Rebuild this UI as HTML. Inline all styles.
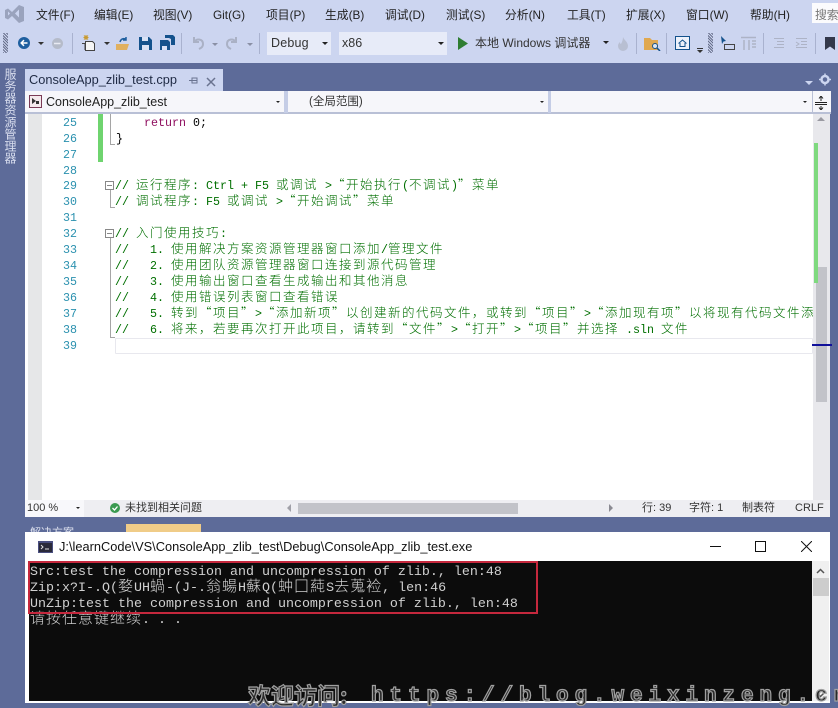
<!DOCTYPE html>
<html lang="zh-CN"><head><meta charset="utf-8"><title>ConsoleApp_zlib_test</title>
<style>
html,body{margin:0;padding:0;background:#5d6b99}
#r{position:relative;width:838px;height:708px;overflow:hidden;background:#5d6b99;font-family:"Liberation Sans","Noto Sans CJK SC",sans-serif;font-size:12px;color:#1e1e1e}
#r div,#r span.a,#r svg{position:absolute}
.t{white-space:nowrap}
.m{top:7px;line-height:16px;font-size:11.8px;white-space:nowrap;color:#222}
.n{left:50px;width:27px;text-align:right;color:#2b91af;font:11.67px/16px "Liberation Mono",monospace}
.l{left:115px;white-space:pre;color:#006f00;font:11.67px/16px "Liberation Mono",monospace}
.l i,.k i{font-style:normal;font-family:"Noto Sans CJK SC",sans-serif;line-height:0;font-size:12.5px;letter-spacing:1.5px;font-weight:300}
.k{left:30px;white-space:pre;color:#d0d0d0;font:13.33px/16px "Liberation Mono",monospace}
.k i{font-size:15px;letter-spacing:1px;font-weight:300}
.sep{width:1px;background:#a9b2cf}
</style></head><body><div id="r">

<!-- top chrome -->
<div style="left:0;top:0;width:838px;height:63px;background:#ccd5f0"></div>
<svg style="left:4px;top:3px" width="21" height="21" viewBox="0 0 21 21"><path d="M1 7l3-1.500 4 3.500 7-7 5 2v14l-5 2-7-7-4 3.500-3-1.500zM4 8.500v4l2-2zM15 6.500l-4 4 4 4z" fill="#9aa3bd" fill-rule="evenodd"/></svg>
<div class="m" style="left:36px">文件(F)</div>
<div class="m" style="left:94px">编辑(E)</div>
<div class="m" style="left:153px">视图(V)</div>
<div class="m" style="left:213px">Git(G)</div>
<div class="m" style="left:266px">项目(P)</div>
<div class="m" style="left:325px">生成(B)</div>
<div class="m" style="left:385px">调试(D)</div>
<div class="m" style="left:446px">测试(S)</div>
<div class="m" style="left:505px">分析(N)</div>
<div class="m" style="left:567px">工具(T)</div>
<div class="m" style="left:626px">扩展(X)</div>
<div class="m" style="left:686px">窗口(W)</div>
<div class="m" style="left:750px">帮助(H)</div>
<div style="left:812px;top:3px;width:26px;height:20px;background:#fbfbfd"></div>
<div class="m" style="left:815px;color:#777">搜索</div>

<!-- toolbar -->
<div style="left:3px;top:33px;width:5px;height:20px;background:repeating-linear-gradient(45deg,#68708c 0 1px,#ccd5f0 1px 2px)"></div>
<svg style="left:17px;top:36px" width="14" height="14" viewBox="0 0 14 14"><circle cx="7" cy="7" r="6" fill="#1f5f9f"/><path d="M10.500 7H4.500M7 4.200L4.200 7 7 9.800" stroke="#fff" stroke-width="1.500" fill="none"/></svg>
<div style="left:38px;top:42px;border:3px solid transparent;border-top-color:#333"></div>
<svg style="left:51px;top:37px" width="13" height="13" viewBox="0 0 13 13"><circle cx="6.500" cy="6.500" r="5.500" fill="#b5bbc9"/><path d="M3 6.500H9.500" stroke="#e8eaf2" stroke-width="1.500"/></svg>
<div class="sep" style="left:72px;top:33px;height:21px"></div>
<svg style="left:81px;top:35px" width="15" height="16" viewBox="0 0 15 16"><path d="M4.500 6.500h7l2 2v7h-9z" fill="#f5f5f5" stroke="#444"/><path d="M1 8.500h3v6h1" fill="none" stroke="#444"/><path d="M5 0v5M2.500 2.500h5M3 .500l4 4M7 .500l-4 4" stroke="#c89a30"/></svg>
<div style="left:104px;top:42px;border:3px solid transparent;border-top-color:#333"></div>
<svg style="left:115px;top:36px" width="15" height="15" viewBox="0 0 15 15"><path d="M1 8h13l-2 6H1z" fill="#e0b060"/><path d="M5 6C6 2.500 9 2 11 3.500M11 1v3H8" stroke="#1f5f9f" stroke-width="1.500" fill="none"/></svg>
<svg style="left:139px;top:37px" width="13" height="13" viewBox="0 0 13 13"><path d="M0 0h10l3 3v10H0z" fill="#14528c"/><path d="M3 0h6v4H3zM3 8h7v5H3z" fill="#d9e2f5"/></svg>
<svg style="left:160px;top:35px" width="15" height="15" viewBox="0 0 15 15"><path d="M0 5h8l2 2v8H0z" fill="#14528c"/><path d="M5 0h8l2 2v8h-4V4L9 3H5z" fill="#14528c"/><path d="M2 11h5v4H2z" fill="#d9e2f5"/></svg>
<div class="sep" style="left:181px;top:33px;height:21px"></div>
<svg style="left:191px;top:36px" width="14" height="14" viewBox="0 0 14 14"><path d="M3 1v5h5M3 6c3-4 9-3 9 2 0 3-2 4-4 5" stroke="#aab1c5" stroke-width="2" fill="none"/></svg>
<div style="left:212px;top:43px;border:3px solid transparent;border-top-color:#8a90a5"></div>
<svg style="left:225px;top:36px" width="14" height="14" viewBox="0 0 14 14"><path d="M11 1v5H6M11 6C8 2 2 3 2 8c0 3 2 4 4 5" stroke="#aab1c5" stroke-width="2" fill="none"/></svg>
<div style="left:247px;top:43px;border:3px solid transparent;border-top-color:#8a90a5"></div>
<div class="sep" style="left:259px;top:33px;height:21px"></div>
<div style="left:267px;top:32px;width:64px;height:23px;background:#e7ebf8"></div>
<div class="t" style="left:271px;top:35px;font-size:12.500px;line-height:17px;color:#333;letter-spacing:.2px">Debug</div>
<div style="left:322px;top:42px;border:3px solid transparent;border-top-color:#222"></div>
<div style="left:339px;top:32px;width:108px;height:23px;background:#e7ebf8"></div>
<div class="t" style="left:342px;top:35px;font-size:12.500px;line-height:17px;color:#333">x86</div>
<div style="left:438px;top:42px;border:3px solid transparent;border-top-color:#222"></div>
<svg style="left:458px;top:37px" width="11" height="13" viewBox="0 0 11 13"><path d="M0 0l10 6.500L0 13z" fill="#2e7d32"/></svg>
<div class="t" style="left:475px;top:35px;font-size:12px;line-height:17px;color:#333">本地 Windows 调试器</div>
<div style="left:603px;top:41px;border:3px solid transparent;border-top-color:#222"></div>
<svg style="left:617px;top:37px" width="12" height="14" viewBox="0 0 12 14"><path d="M6 0c1 3 5 5 5 9a5 5 0 0 1-10 0c0-2 1-3 2-4 0 2 1 2 1 2 1-2 2-4 2-7z" fill="#b8bfd2"/></svg>
<div class="sep" style="left:636px;top:33px;height:21px"></div>
<svg style="left:644px;top:37px" width="17" height="14" viewBox="0 0 17 14"><path d="M0 1h6l2 2h6v10H0z" fill="#e0a850"/><circle cx="11" cy="9" r="2.500" fill="#dce6f5" stroke="#14528c"/><path d="M13 11l3 3" stroke="#14528c" stroke-width="1.500"/></svg>
<div class="sep" style="left:666px;top:33px;height:21px"></div>
<svg style="left:675px;top:36px" width="15" height="14" viewBox="0 0 15 14"><path d="M.5.500h14v13H.5z" fill="#eef2fb" stroke="#14528c"/><path d="M3.500 7.500L7.500 4l4 3.500M5 7v3.500h5V7" stroke="#14528c" fill="none"/></svg>
<div style="left:697px;top:48px;width:6px;height:1px;background:#333"></div>
<div style="left:697px;top:50px;border:3px solid transparent;border-top-color:#333"></div>
<div style="left:708px;top:33px;width:5px;height:20px;background:repeating-linear-gradient(45deg,#68708c 0 1px,#ccd5f0 1px 2px)"></div>
<svg style="left:720px;top:36px" width="15" height="15" viewBox="0 0 15 15"><path d="M1 0l5 5-2.500.500L2 8z" fill="#14528c"/><path d="M4.500 8.500h10v5h-10z" fill="none" stroke="#444"/></svg>
<svg style="left:741px;top:36px" width="16" height="15" viewBox="0 0 16 15"><path d="M0 1.500h15M3 4v10M8 4v10M11 5h4M11 8h4M11 11h4" stroke="#adb3c6" stroke-width="1.500"/></svg>
<div class="sep" style="left:763px;top:33px;height:21px"></div>
<svg style="left:773px;top:38px" width="12" height="11" viewBox="0 0 12 11"><path d="M1 .500h10M4 3.500h7M4 6.500h7M1 9.500h10" stroke="#adb3c6"/></svg>
<svg style="left:795px;top:38px" width="13" height="11" viewBox="0 0 13 11"><path d="M1 .500h11M6 3.500h6M6 6.500h6M1 9.500h11M1 4l3 2-3 2" stroke="#adb3c6" fill="none"/></svg>
<div class="sep" style="left:815px;top:33px;height:21px"></div>
<svg style="left:825px;top:37px" width="10" height="13" viewBox="0 0 10 13"><path d="M0 0h10v13L5 9.500 0 13z" fill="#33384a"/></svg>

<!-- side tab -->
<div class="t" style="left:3px;top:68px;writing-mode:vertical-rl;font-size:12px;line-height:13px;letter-spacing:0;color:#d8ddee">服务器资源管理器</div>

<!-- doc tab -->
<div style="left:25px;top:69px;width:198px;height:22px;background:#ccd5f0"></div>
<div class="t" style="left:29px;top:72px;font-size:12.800px;line-height:16px;color:#1f2a44">ConsoleApp_zlib_test.cpp</div>
<svg style="left:189px;top:76px" width="9" height="9" viewBox="0 0 9 9"><path d="M0 4.500h3M3 2v5h5V2zM3 4.500h5" stroke="#6a7390" fill="none"/></svg>
<svg style="left:206px;top:77px" width="10" height="10" viewBox="0 0 10 10"><path d="M1 1l8 8M9 1l-8 8" stroke="#6a7390" stroke-width="1.500"/></svg>
<div style="left:805px;top:81px;border:4px solid transparent;border-top-color:#ccd5f0"></div>
<svg style="left:819px;top:73px" width="12" height="13" viewBox="0 0 12 13"><circle cx="6" cy="6.500" r="3.500" fill="none" stroke="#ccd5f0" stroke-width="2.500"/><path d="M6 .500v2M6 10.500v2M0 6.500h2M10 6.500h2" stroke="#ccd5f0" stroke-width="1.500"/></svg>

<!-- nav bar -->
<div style="left:25px;top:91px;width:806px;height:22px;background:#f6f6fa"></div>
<div style="left:25px;top:112px;width:806px;height:2px;background:#b9c0d6"></div>
<div style="left:284px;top:91px;width:4px;height:22px;background:#c5cde6"></div>
<div style="left:548px;top:91px;width:3px;height:22px;background:#c5cde6"></div>
<div style="left:812px;top:91px;width:1px;height:22px;background:#b9c0d6"></div>
<svg style="left:29px;top:95px" width="14" height="14" viewBox="0 0 14 14"><path d="M.5.500h12v12H.5z" fill="#f4e9ec" stroke="#7a3a55"/><path d="M3 3l4 3-4 3zM7 6h3v3H7z" fill="#333"/></svg>
<div class="t" style="left:46px;top:94px;font-size:12.500px;line-height:16px;color:#222">ConsoleApp_zlib_test</div>
<div style="left:276px;top:101px;border:2.500px solid transparent;border-top-color:#222"></div>
<div class="t" style="left:309px;top:94px;font-size:11.500px;line-height:16px;color:#333">(全局范围)</div>
<div style="left:540px;top:101px;border:2.500px solid transparent;border-top-color:#222"></div>
<div style="left:803px;top:101px;border:2.500px solid transparent;border-top-color:#222"></div>
<svg style="left:815px;top:96px" width="12" height="14" viewBox="0 0 12 14"><path d="M0 6.500h12M0 8.500h12M6 0v5M6 10v4M4 2.500l2-2.500 2 2.500M4 11.500l2 2.500 2-2.500" stroke="#222" fill="none"/></svg>

<!-- editor -->
<div style="left:25px;top:114px;width:788px;height:386px;background:#fff"></div>
<div style="left:28px;top:114px;width:14px;height:386px;background:#e6e7e8"></div>
<div style="left:98px;top:114px;width:5px;height:48px;background:#6fd46f"></div>
<div style="left:115px;top:338px;width:696px;height:14px;border:1px solid #e8e8ee;border-radius:1px"></div>

<div class="n" style="top:115px">25</div><div class="n" style="top:131px">26</div><div class="n" style="top:147px">27</div><div class="n" style="top:163px">28</div><div class="n" style="top:178px">29</div><div class="n" style="top:194px">30</div><div class="n" style="top:210px">31</div><div class="n" style="top:226px">32</div><div class="n" style="top:242px">33</div><div class="n" style="top:258px">34</div><div class="n" style="top:274px">35</div><div class="n" style="top:290px">36</div><div class="n" style="top:306px">37</div><div class="n" style="top:322px">38</div><div class="n" style="top:338px">39</div>

<div style="left:110px;top:114px;width:1px;height:30px;background:#a5a5a5"></div>
<div style="left:110px;top:144px;width:5px;height:1px;background:#a5a5a5"></div>
<div style="left:110px;top:190px;width:1px;height:17px;background:#a5a5a5"></div>
<div style="left:110px;top:207px;width:5px;height:1px;background:#a5a5a5"></div>
<div style="left:110px;top:238px;width:1px;height:99px;background:#a5a5a5"></div>
<div style="left:110px;top:337px;width:5px;height:1px;background:#a5a5a5"></div>
<svg style="left:105px;top:181px" width="9" height="9" viewBox="0 0 9 9"><path d="M.5.500h8v8h-8zM2 4.500h5" fill="#fff" stroke="#888"/></svg>
<svg style="left:105px;top:229px" width="9" height="9" viewBox="0 0 9 9"><path d="M.5.500h8v8h-8zM2 4.500h5" fill="#fff" stroke="#888"/></svg>

<div class="l" style="left:144px;top:115px;color:#000"><span style="color:#8f0e5f">return</span> 0;</div>
<div class="l" style="left:116px;top:131px;color:#000">}</div>
<div class="l" style="top:178px">// <i>运行程序</i>: Ctrl + F5 <i>或调试</i> &gt;<i>“开始执行</i>(<i>不调试</i>)<i>”菜单</i></div>
<div class="l" style="top:194px">// <i>调试程序</i>: F5 <i>或调试</i> &gt;<i>“开始调试”菜单</i></div>
<div class="l" style="top:226px">// <i>入门使用技巧</i>:</div>
<div class="l" style="top:242px">//   1. <i>使用解决方案资源管理器窗口添加</i>/<i>管理文件</i></div>
<div class="l" style="top:258px">//   2. <i>使用团队资源管理器窗口连接到源代码管理</i></div>
<div class="l" style="top:274px">//   3. <i>使用输出窗口查看生成输出和其他消息</i></div>
<div class="l" style="top:290px">//   4. <i>使用错误列表窗口查看错误</i></div>
<div class="l" style="top:306px;width:698px;overflow:hidden">//   5. <i>转到“项目”</i>&gt;<i>“添加新项”以创建新的代码文件，或转到“项目”</i>&gt;<i>“添加现有项”以将现有代码文件添</i></div>
<div class="l" style="top:322px">//   6. <i>将来，若要再次打开此项目，请转到“文件”</i>&gt;<i>“打开”</i>&gt;<i>“项目”并选择</i> .sln <i>文件</i></div>

<!-- editor scrollbar -->
<div style="left:813px;top:114px;width:17px;height:386px;background:#e8e8ec"></div>
<div style="left:817px;top:117px;border:4px solid transparent;border-bottom-color:#9a9aa2;border-top:0"></div>
<div style="left:816px;top:267px;width:11px;height:135px;background:#c2c3c9"></div>
<div style="left:814px;top:143px;width:4px;height:140px;background:#7fd97f"></div>
<div style="left:812px;top:344px;width:20px;height:2px;background:#10109a"></div>

<!-- status row -->
<div style="left:25px;top:500px;width:805px;height:17px;background:#eeeef2"></div>
<div style="left:25px;top:500px;width:59px;height:17px;background:#f8f8fb"></div>
<div class="t" style="left:27px;top:501px;font-size:11px;line-height:15px;color:#333">100 %</div>
<div style="left:76px;top:507px;border:2.500px solid transparent;border-top-color:#222"></div>
<svg style="left:110px;top:503px" width="10" height="10" viewBox="0 0 10 10"><circle cx="5" cy="5" r="5" fill="#3a9a50"/><path d="M2.500 5l2 2 3-3.500" stroke="#fff" stroke-width="1.300" fill="none"/></svg>
<div class="t" style="left:125px;top:500px;font-size:11px;line-height:16px;color:#333">未找到相关问题</div>
<div style="left:287px;top:504px;border:4px solid transparent;border-right-color:#a0a0a8;border-left:0"></div>
<div style="left:298px;top:503px;width:220px;height:11px;background:#c2c3c9"></div>
<div style="left:609px;top:504px;border:4px solid transparent;border-left-color:#8a8a92;border-right:0"></div>
<div class="t" style="left:642px;top:500px;font-size:11px;line-height:16px;color:#333">行: 39</div>
<div class="t" style="left:689px;top:500px;font-size:11px;line-height:16px;color:#333">字符: 1</div>
<div class="t" style="left:742px;top:500px;font-size:11px;line-height:16px;color:#333">制表符</div>
<div class="t" style="left:795px;top:500px;font-size:11px;line-height:16px;color:#333">CRLF</div>

<!-- bottom tabs -->
<div style="left:126px;top:524px;width:75px;height:10px;background:#f0cc88"></div>
<div class="t" style="left:30px;top:527px;font-size:11px;line-height:12px;color:#dfe3f0">解决方案</div>

<!-- console -->
<div style="left:25px;top:532px;width:805px;height:171px;background:#fff"></div>
<div style="left:29px;top:561px;width:783px;height:140px;background:#0c0c0c"></div>
<svg style="left:38px;top:541px" width="15" height="12" viewBox="0 0 15 12"><path d="M0 0h15v12H0z" fill="#4a4f80"/><path d="M1 2h13v9H1z" fill="#2a2a3a"/><path d="M3 4l2 2-2 2M7 8h4" stroke="#e0e0e0" fill="none"/></svg>
<div class="t" style="left:59px;top:539px;font-size:12.800px;line-height:16px;color:#111">J:\learnCode\VS\ConsoleApp_zlib_test\Debug\ConsoleApp_zlib_test.exe</div>
<div style="left:710px;top:546px;width:11px;height:1px;background:#111"></div>
<div style="left:755px;top:541px;width:9px;height:9px;border:1px solid #111"></div>
<svg style="left:801px;top:541px" width="11" height="11" viewBox="0 0 11 11"><path d="M0 0l11 11M11 0L0 11" stroke="#111"/></svg>
<div style="left:812px;top:561px;width:17px;height:140px;background:#f0f0f0"></div>
<svg style="left:816px;top:568px" width="9" height="6" viewBox="0 0 9 6"><path d="M1 5l3.500-3.500L8 5" stroke="#555" stroke-width="1.500" fill="none"/></svg>
<div style="left:813px;top:578px;width:16px;height:18px;background:#cdcdcd"></div>
<svg style="left:816px;top:692px" width="9" height="6" viewBox="0 0 9 6"><path d="M1 1l3.500 3.500L8 1" stroke="#555" stroke-width="1.500" fill="none"/></svg>

<div class="k" style="top:565px">Src:test the compression and uncompression of zlib., len:48</div>
<div class="k" style="top:581px">Zip:x?I-.Q(<i>婺</i>UH<i>蝸</i>-(J-.<i>翁蝪</i>H<i>蘇</i>Q(<i>蚛囗蒓</i>S<i>去蒐裣</i>, len:46</div>
<div class="k" style="top:597px">UnZip:test the compression and uncompression of zlib., len:48</div>
<div class="k" style="top:613px"><i>请按任意键继续</i>. . .</div>
<div style="left:28px;top:561px;width:506px;height:49px;border:2px solid #c5283d"></div>

<!-- watermark -->
<div class="t" style="left:248px;top:681px;font-family:'Noto Sans CJK SC',sans-serif;font-weight:700;font-size:23px;line-height:26px;color:#2b2b2b;-webkit-text-stroke:1.200px #a0a0a0">欢迎访问:</div>
<div class="t" style="left:371px;top:685px;font-family:'Liberation Mono',monospace;font-weight:700;font-size:21px;line-height:24px;color:#2b2b2b;-webkit-text-stroke:1.200px #a0a0a0;letter-spacing:5.900px">https://blog.weixinzeng.cn</div>

</div></body></html>
